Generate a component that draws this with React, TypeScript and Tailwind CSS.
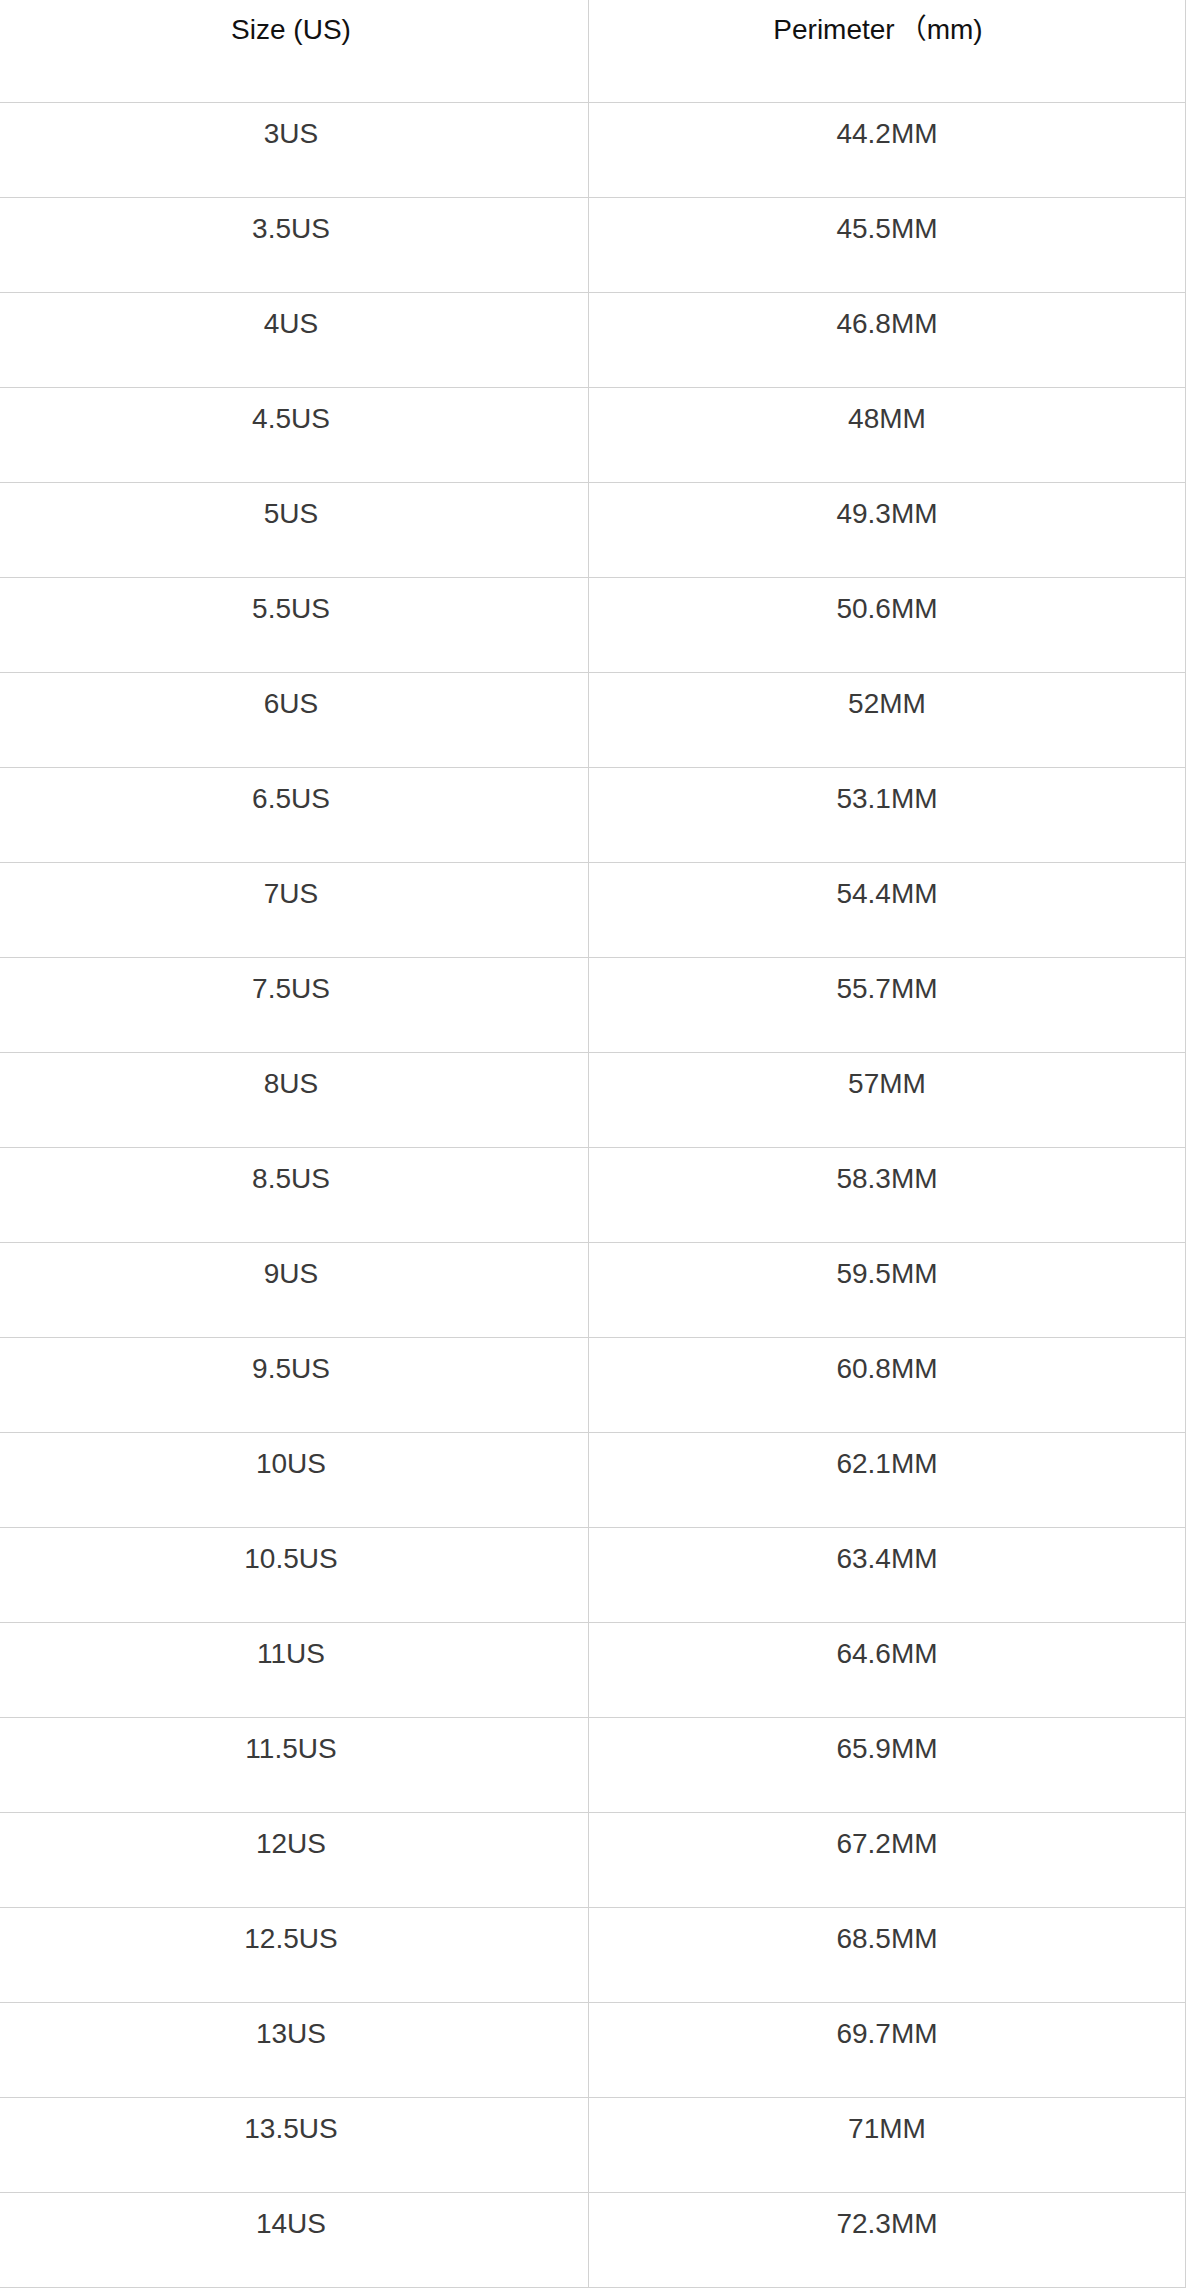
import React from 'react'

const rows: [string, string][] = [
  ['3US', '44.2MM'],
  ['3.5US', '45.5MM'],
  ['4US', '46.8MM'],
  ['4.5US', '48MM'],
  ['5US', '49.3MM'],
  ['5.5US', '50.6MM'],
  ['6US', '52MM'],
  ['6.5US', '53.1MM'],
  ['7US', '54.4MM'],
  ['7.5US', '55.7MM'],
  ['8US', '57MM'],
  ['8.5US', '58.3MM'],
  ['9US', '59.5MM'],
  ['9.5US', '60.8MM'],
  ['10US', '62.1MM'],
  ['10.5US', '63.4MM'],
  ['11US', '64.6MM'],
  ['11.5US', '65.9MM'],
  ['12US', '67.2MM'],
  ['12.5US', '68.5MM'],
  ['13US', '69.7MM'],
  ['13.5US', '71MM'],
  ['14US', '72.3MM'],
]

const App: React.FC = () => {
  return (
    <div className="w-[1186px] bg-white font-['Liberation_Sans','Noto_Sans_CJK_SC',sans-serif] text-[28px] leading-[34px]">
      {/* Header */}
      <div className="grid grid-cols-[589px_597px] h-[103px] border-b border-[#d2d2d2]">
        <div className="border-r border-[#d2d2d2] text-center pt-[13px] pr-[6px] text-[#111111]">
          Size (US)
        </div>
        <div className="border-r border-[#d2d2d2] text-center pt-[13px] pr-[18px] text-[#111111]">
          <span className="mr-[4px]">Perimeter</span>（mm)
        </div>
      </div>

      {/* Rows */}
      {rows.map(([size, perimeter]) => (
        <div
          key={size}
          className="grid grid-cols-[589px_597px] h-[95px] border-b border-[#d2d2d2]"
        >
          <div className="border-r border-[#d2d2d2] text-center pt-[14px] pr-[6px] text-[#3a3a3a]">
            {size}
          </div>
          <div className="border-r border-[#d2d2d2] text-center pt-[14px] text-[#3a3a3a]">
            {perimeter}
          </div>
        </div>
      ))}
    </div>
  )
}

export default App
